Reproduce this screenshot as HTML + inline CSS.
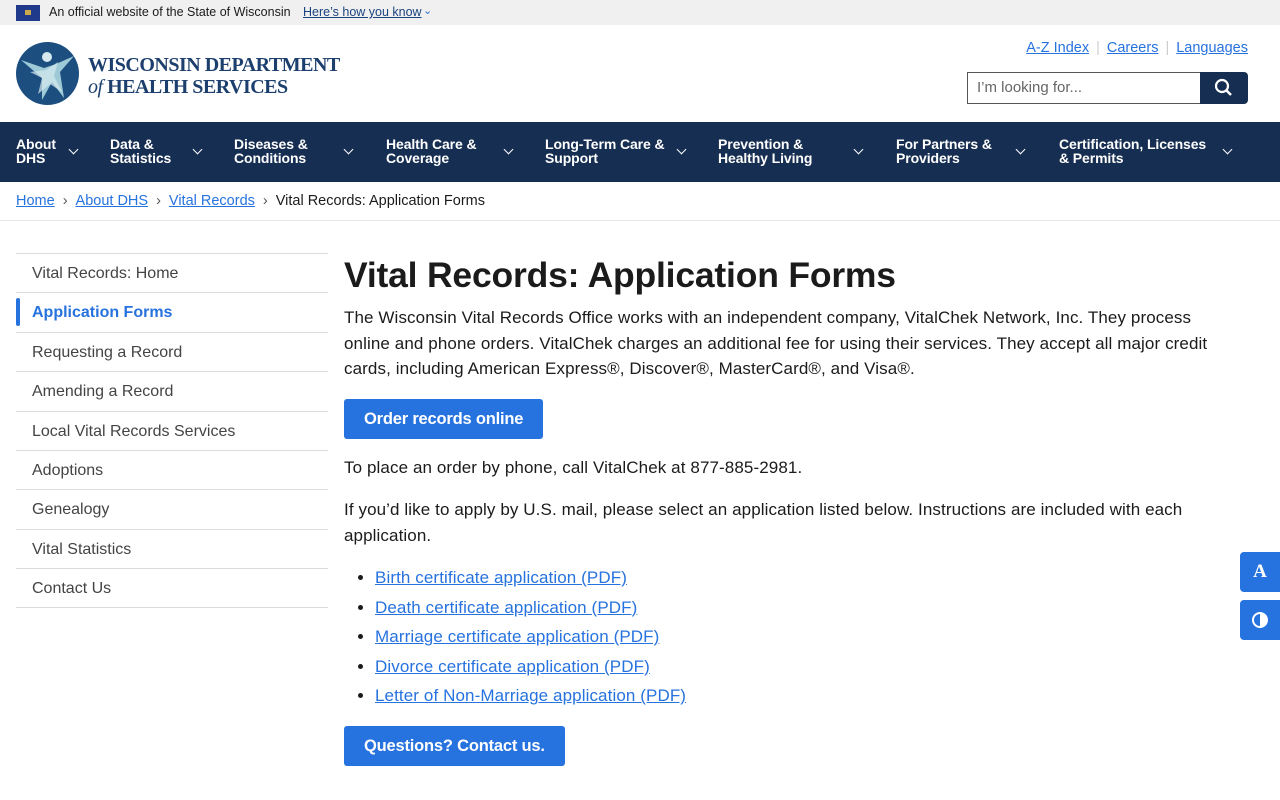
<!DOCTYPE html>
<html><head><meta charset="utf-8"><style>
*{margin:0;padding:0;box-sizing:border-box}
body{width:1280px;height:800px;overflow:hidden;font-family:"Liberation Sans",sans-serif;color:#1b1b1b;background:#fff;position:relative}
a{color:#2672de;text-decoration:underline}
.abs{position:absolute}
.banner{top:0;left:0;width:1280px;height:25px;background:#f0f0f0;font-size:12.5px;line-height:25px}
.nav{top:122px;left:0;width:1280px;height:60px;background:#162e51}
.ni{position:absolute;top:15px;color:#fff;font-weight:bold;font-size:14px;line-height:14px;letter-spacing:-.1px}
.ch{position:absolute;top:24px;width:7px;height:7px;border-right:1.5px solid #fff;border-bottom:1.5px solid #fff;transform:rotate(45deg)}
.bc{top:193px;left:16px;font-size:14.5px}
.bc span.s{color:#555;margin:0 8px}
.side{top:253px;left:16px;width:312px}
.side div{height:39.4px;border-top:1px solid #dcdcdc;font-size:16px;color:#444;padding-left:16px;line-height:39px;position:relative}
.side div.act{color:#2672de;font-weight:bold}
.side div.act:before{content:"";position:absolute;left:0;top:5px;width:4px;height:28px;background:#2672de;border-radius:2px}
.main{left:344px;top:255px;width:920px;font-size:17px;line-height:25.5px;letter-spacing:.1px}
h1{font-size:35.5px;line-height:40px;margin-bottom:10px;letter-spacing:-.2px}
.btn{display:inline-block;background:#2672de;color:#fff;font-weight:bold;font-size:16.5px;letter-spacing:-.2px;padding:0 20px;height:40px;line-height:40px;border-radius:3px}
ul{padding-left:31px;margin:0}
li{line-height:29.6px}
.tool{left:1240px;width:40px;height:40px;background:#2672de;border-radius:4px 0 0 4px;color:#fff;font-weight:bold;font-family:"Liberation Serif",serif;font-size:19px;text-align:center;line-height:40px}
</style></head><body>
<div class="abs banner">
<div class="abs" style="left:16px;top:5px;width:24px;height:16px;background:#1f3a8a"><div class="abs" style="left:9px;top:5px;width:6px;height:5px;background:#c9a94a"></div></div>
<span class="abs" style="left:49px">An official website of the State of Wisconsin</span>
<a class="abs" style="left:303px;color:#1a4480">Here’s how you know</a>
<span class="abs" style="left:423px;top:-1px;color:#2672de;font-size:11px">⌄</span>
</div>
<svg class="abs" style="left:16px;top:42px" width="63" height="63" viewBox="0 0 63 63">
<circle cx="31.5" cy="31.5" r="31.5" fill="#1c4e80"/>
<circle cx="31" cy="15" r="5" fill="#d7e9ef"/>
<path d="M5 18 L28 26 L40 22 L58 14 L44 30 L48 56 L36 40 L26 58 L26 36 Z" fill="#9ec9d6"/>
<path d="M14 30 L30 28 L42 20 L38 34 L46 50 L34 42 L22 52 L26 36 Z" fill="#d7e9ef" opacity=".7"/>
</svg>
<div class="abs" style="left:88px;top:54px;font-family:'Liberation Serif',serif;font-weight:bold;color:#1c3f6e;font-size:20px;line-height:22px;letter-spacing:-.5px">WISCONSIN DEPARTMENT<br><i style="font-weight:normal">of</i> HEALTH SERVICES</div>
<div class="abs" style="right:32px;top:40px;font-size:14.5px"><a>A-Z Index</a><span style="color:#ccc;margin:0 7px">|</span><a>Careers</a><span style="color:#ccc;margin:0 7px">|</span><a>Languages</a></div>
<div class="abs" style="left:967px;top:72px;width:234px;height:32px;border:1px solid #555;border-right:none;font-size:15px;color:#666;padding:6px 9px">I’m looking for...</div>
<div class="abs" style="left:1200px;top:72px;width:48px;height:32px;background:#162e51;border-radius:0 4px 4px 0">
<svg width="48" height="32"><circle cx="22" cy="14" r="6" stroke="#fff" stroke-width="2.2" fill="none"/><line x1="26.5" y1="18.5" x2="31" y2="23" stroke="#fff" stroke-width="2.5"/></svg></div>
<div class="abs nav">
<div class="ni" style="left:16px">About<br>DHS</div><div class="ch" style="left:70px"></div>
<div class="ni" style="left:110px">Data &amp;<br>Statistics</div><div class="ch" style="left:194px"></div>
<div class="ni" style="left:234px">Diseases &amp;<br>Conditions</div><div class="ch" style="left:345px"></div>
<div class="ni" style="left:386px">Health Care &amp;<br>Coverage</div><div class="ch" style="left:505px"></div>
<div class="ni" style="left:545px">Long-Term Care &amp;<br>Support</div><div class="ch" style="left:678px"></div>
<div class="ni" style="left:718px">Prevention &amp;<br>Healthy Living</div><div class="ch" style="left:855px"></div>
<div class="ni" style="left:896px">For Partners &amp;<br>Providers</div><div class="ch" style="left:1017px"></div>
<div class="ni" style="left:1059px">Certification, Licenses<br>&amp; Permits</div><div class="ch" style="left:1224px"></div>
</div>
<div class="abs bc"><a>Home</a><span class="s">›</span><a>About DHS</a><span class="s">›</span><a>Vital Records</a><span class="s">›</span>Vital Records: Application Forms</div>
<div class="abs" style="top:220px;left:0;width:1280px;border-top:1px solid #e6e6e6"></div>
<div class="abs side">
<div>Vital Records: Home</div><div class="act">Application Forms</div><div>Requesting a Record</div><div>Amending a Record</div><div>Local Vital Records Services</div><div>Adoptions</div><div>Genealogy</div><div>Vital Statistics</div><div style="border-bottom:1px solid #dcdcdc">Contact Us</div>
</div>
<div class="abs main">
<h1>Vital Records: Application Forms</h1>
<p>The Wisconsin Vital Records Office works with an independent company, VitalChek Network, Inc. They process<br>online and phone orders. VitalChek charges an additional fee for using their services. They accept all major credit<br>cards, including American Express®, Discover®, MasterCard®, and Visa®.</p>
<div style="margin-top:17px" class="btn">Order records online</div>
<p style="margin-top:16px">To place an order by phone, call VitalChek at 877-885-2981.</p>
<p style="margin-top:17px">If you’d like to apply by U.S. mail, please select an application listed below. Instructions are included with each<br>application.</p>
<ul style="margin-top:15px">
<li><a>Birth certificate application (PDF)</a></li>
<li><a>Death certificate application (PDF)</a></li>
<li><a>Marriage certificate application (PDF)</a></li>
<li><a>Divorce certificate application (PDF)</a></li>
<li><a>Letter of Non-Marriage application (PDF)</a></li>
</ul>
<div style="margin-top:15px" class="btn">Questions? Contact us.</div>
</div>
<div class="abs tool" style="top:552px">A</div>
<div class="abs tool" style="top:600px"><svg width="18" height="18" style="margin-top:11px"><circle cx="9" cy="9" r="7" stroke="#fff" stroke-width="2" fill="none"/><path d="M9 2 A7 7 0 0 1 9 16 Z" fill="#fff"/></svg></div>
</body></html>
